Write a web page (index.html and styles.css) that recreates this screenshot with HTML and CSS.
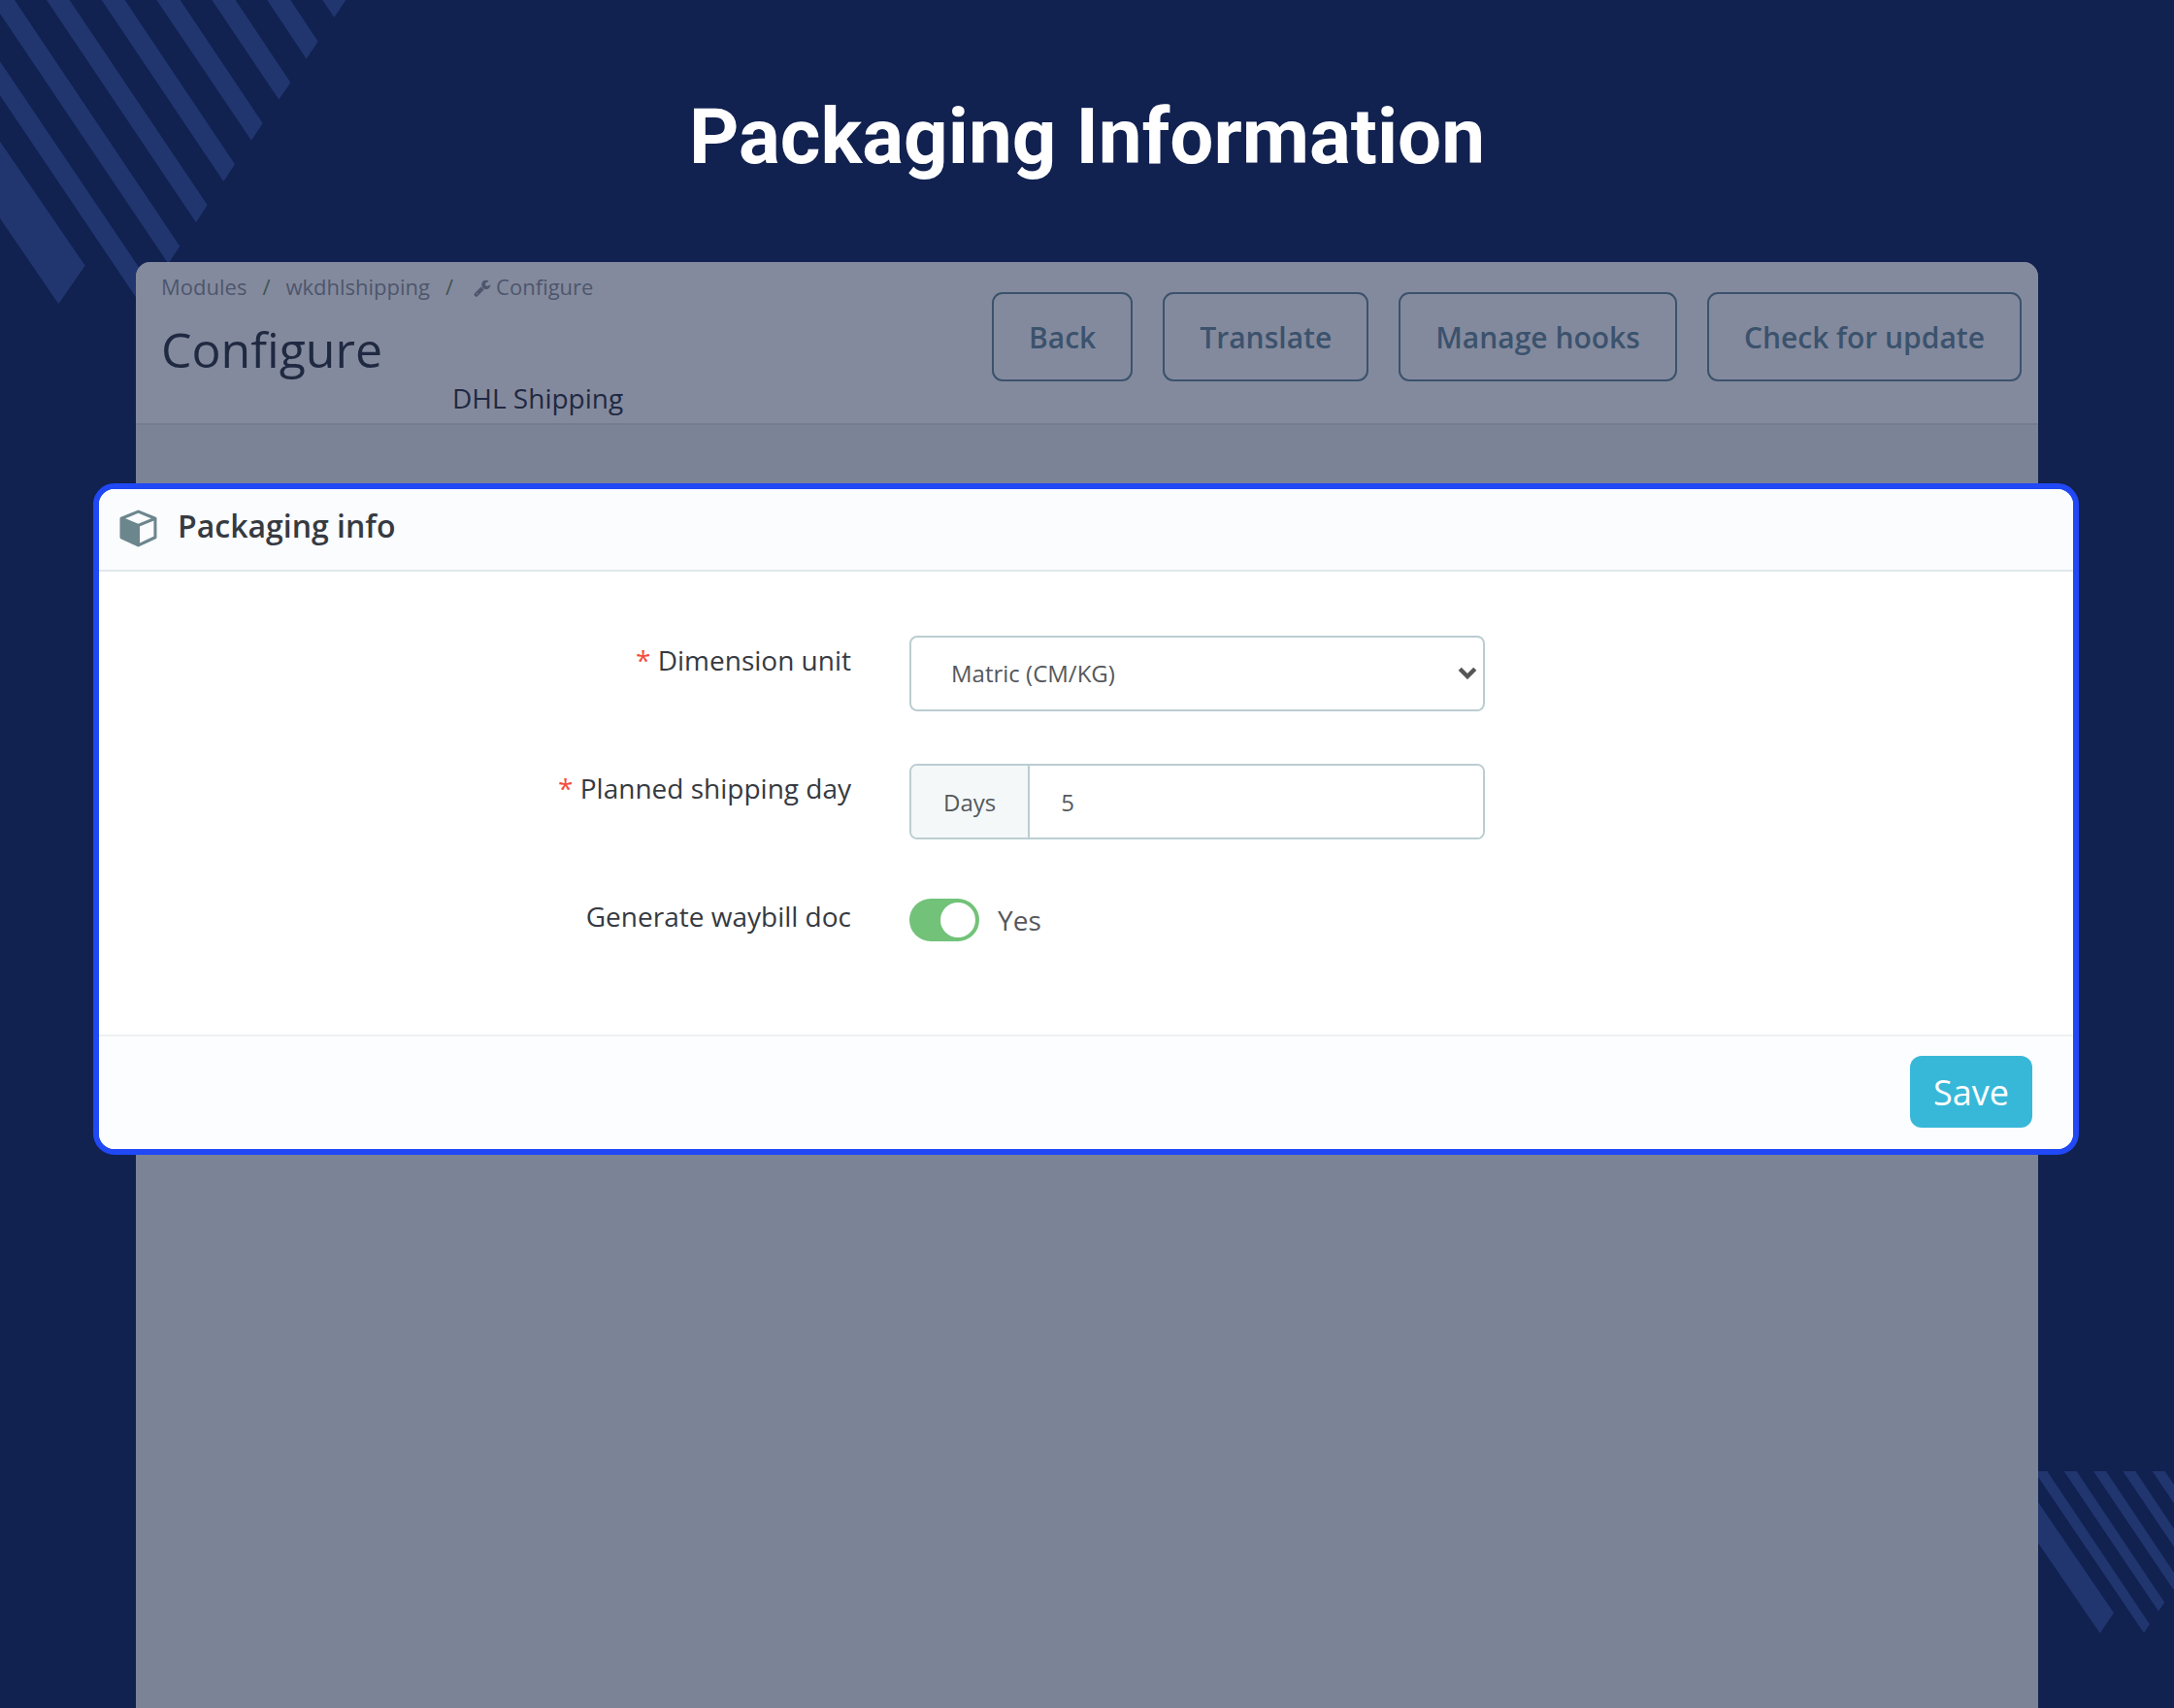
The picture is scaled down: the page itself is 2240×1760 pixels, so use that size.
FILE: index.html
```html
<!DOCTYPE html>
<html lang="en">
<head>
<meta charset="utf-8">
<meta name="viewport" content="width=device-width, initial-scale=1">
<title>Packaging Information</title>
<link rel="stylesheet" href="styles.css">
</head>
<body>
<div class="page">
  <svg class="stripes stripes-top" viewBox="0 0 1140 990" aria-hidden="true">
    <path d="M997 0H1069L1033 54ZM826 0H898L983 128L947 182ZM655 0H728L898 255L862 308ZM484 0H557L812 381L777 434ZM314 0H386L726 508L691 561ZM144 0H215L641 634L606 688ZM0 0H45L556 761L520 815L0 42ZM0 190L471 888L435 941L0 295ZM0 437L263 821L181 940L0 675Z"/>
  </svg>
  <svg class="stripes stripes-bottom" viewBox="0 0 450 600" aria-hidden="true">
    <path d="M18 48H58L375 521L357 548ZM110 48H149L421 454L402 481ZM201 48H240L467 387L448 414ZM292 48H331L512 319L493 346ZM383 48H422L560 254L540 282ZM0 100L264 486L221 549L0 226Z"/>
  </svg>

  <h1 class="page-title">Packaging Information</h1>

  <main class="panel">
    <header class="panel-header">
      <div class="heading">
        <nav class="breadcrumb" aria-label="Breadcrumb">
          <a href="#">Modules</a>
          <span class="slash">/</span>
          <a href="#">wkdhlshipping</a>
          <span class="slash">/</span>
          <a class="current" href="#">
            <svg class="wrench" viewBox="64 64 1700 1728" aria-hidden="true"><path d="M448 1472q0-26-19-45t-45-19-45 19-19 45 19 45 45 19 45-19 19-45zm644-420l-682 682q-37 37-90 37-52 0-91-37l-106-108q-38-36-38-90 0-53 38-91l681-681q39 98 114.500 173.500t173.500 114.500zm634-435q0 39-23 106-47 134-164.500 217.500t-258.500 83.500q-185 0-316.500-131.500t-131.500-316.500 131.500-316.500 316.500-131.500q58 0 121.500 16.500t107.500 46.500q16 11 16 28t-16 28l-293 169v224l193 107q5-3 79-48.500t135.500-81 70.500-35.500q15 0 23.500 10t8.500 25z"/></svg>Configure
          </a>
        </nav>
        <h2 class="title">Configure</h2>
        <p class="module-name">DHL Shipping</p>
      </div>
      <div class="toolbar">
        <button type="button">Back</button>
        <button type="button">Translate</button>
        <button type="button">Manage hooks</button>
        <button type="button">Check for update</button>
      </div>
    </header>

    <form class="card">
      <header class="card-header">
        <svg class="cube" viewBox="0 0 38 38" aria-hidden="true">
          <path class="cube-line" d="M19 3L36 10V29L19 37L2 29V10Z"/>
          <path class="cube-line" d="M2 10L19 17L36 10M19 17V37"/>
          <path class="cube-face" d="M2 10L19 17V37L2 29Z"/>
        </svg>
        <h3>Packaging info</h3>
      </header>
      <div class="card-body">
        <div class="row">
          <label for="unit"><span class="required">*</span> Dimension unit</label>
          <div class="select">
            <select id="unit"><option>Matric (CM/KG)</option></select>
            <svg class="chevron" viewBox="0 0 18 12" aria-hidden="true"><path d="M2 2L9 9L16 2"/></svg>
          </div>
        </div>
        <div class="row">
          <label for="days"><span class="required">*</span> Planned shipping day</label>
          <div class="input-group">
            <span class="addon">Days</span>
            <input id="days" type="text" value="5">
          </div>
        </div>
        <div class="row">
          <label for="waybill">Generate waybill doc</label>
          <div class="switch">
            <input id="waybill" type="checkbox" role="switch" checked>
            <span>Yes</span>
          </div>
        </div>
      </div>
      <footer class="card-footer">
        <button type="submit">Save</button>
      </footer>
    </form>
  </main>
</div>
</body>
</html>
```
FILE: styles.css
```css
* {
  box-sizing: border-box;
}

body,
h1,
h2,
h3,
p {
  margin: 0;
}

body {
  background: #112150;
  font-family: "Open Sans", "Noto Sans", sans-serif;
}

button,
input,
select {
  font-family: inherit;
}

.page {
  position: relative;
  display: flex;
  flex-direction: column;
  min-height: 100vh;
  overflow: hidden;
}

.stripes {
  position: absolute;
  fill: #21366f;
}

.stripes-top {
  top: 0;
  left: 0;
  width: 380px;
}

.stripes-bottom {
  right: 0;
  bottom: 60px;
  width: 150px;
}

.page-title {
  padding: 93px 0 81px;
  color: #fff;
  font: 700 80px/96px Roboto, sans-serif;
  text-align: center;
}

.panel {
  position: relative;
  flex: 1;
  margin: 0 140px;
  border-radius: 15px 15px 0 0;
  background: #7b8396;
}

.panel-header {
  display: flex;
  justify-content: space-between;
  align-items: flex-start;
  padding: 0 17px 0 26px;
  border-bottom: 2px solid #747d8f;
  border-radius: 15px 15px 0 0;
  background: #848a9d;
}

.heading {
  width: 500px;
}

.breadcrumb {
  display: flex;
  gap: 16px;
  padding-top: 9px;
  color: #4d566d;
  font-size: 22px;
  line-height: 32px;
}

.breadcrumb a {
  color: inherit;
  text-decoration: none;
}

.breadcrumb .slash {
  color: #3f5550;
}

.breadcrumb .current {
  display: flex;
  align-items: center;
  gap: 5px;
  padding-left: 5px;
}

.wrench {
  width: 18px;
  height: 18px;
  margin-top: 4px;
  fill: currentColor;
}

.title {
  padding-top: 15px;
  color: #1f2942;
  font-size: 50px;
  font-weight: 400;
  line-height: 68px;
}

.module-name {
  padding: 0 0 10px 300px;
  color: #1f2942;
  font-size: 28px;
  line-height: 32px;
}

.toolbar {
  display: flex;
  gap: 31px;
  padding-top: 31px;
}

.toolbar button {
  height: 92px;
  padding: 0 36px;
  border: 2px solid #3b526d;
  border-radius: 11px;
  background: none;
  color: #3b526d;
  font-size: 30px;
  font-weight: 600;
}

.card {
  margin: 60px -42px 0 -44px;
  overflow: hidden;
  border: 6px solid #2148f5;
  border-radius: 22px;
  background: #fff;
}

.card-header {
  display: flex;
  align-items: center;
  gap: 21px;
  height: 85px;
  padding: 0 21px 4px;
  border-bottom: 2px solid #dfe8ec;
  background: #fafcfe;
}

.card-header h3 {
  padding-bottom: 4px;
  color: #363a41;
  font-size: 32px;
  font-weight: 600;
  line-height: 44px;
}

.cube {
  width: 39px;
  height: 39px;
  overflow: visible;
}

.cube-line {
  fill: none;
  stroke: #6c868e;
  stroke-width: 3;
  stroke-linejoin: round;
}

.cube-face {
  fill: #6c868e;
}

.card-body {
  display: grid;
  gap: 54px;
  padding: 66px 0 69px;
}

.row {
  display: grid;
  grid-template-columns: 775fr 593fr 546fr;
  column-gap: 60px;
  min-height: 78px;
}

.row label {
  padding-top: 5px;
  color: #363a41;
  font-size: 28px;
  line-height: 40px;
  text-align: right;
}

.required {
  color: #f54c3e;
}

.select {
  position: relative;
  display: flex;
}

.select select {
  width: 100%;
  height: 78px;
  padding: 0 41px 2px;
  border: 2px solid #bbcdd2;
  border-radius: 8px;
  background: #fff;
  color: #55585c;
  font-size: 24px;
  appearance: none;
}

.chevron {
  position: absolute;
  top: 32px;
  right: 8px;
  width: 20px;
  fill: none;
  stroke: #555;
  stroke-width: 4;
}

.input-group {
  display: flex;
  height: 78px;
  border: 2px solid #bbcdd2;
  border-radius: 8px;
  overflow: hidden;
  color: #55585c;
  font-size: 24px;
}

.addon {
  display: flex;
  align-items: center;
  padding: 0 33px;
  border-right: 2px solid #bbcdd2;
  background: #f4f8f9;
}

.input-group input {
  flex: 1;
  min-width: 0;
  padding: 0 32px;
  border: 0;
  background: #fff;
  color: inherit;
  font-size: 24px;
}

.switch {
  display: flex;
  align-items: center;
  gap: 19px;
  height: 58px;
  color: #55585c;
  font-size: 28px;
}

.switch input {
  width: 72px;
  height: 44px;
  margin: 0;
  padding: 4px;
  border-radius: 22px;
  background: #bbcdd2;
  appearance: none;
}

.switch input::before {
  content: "";
  display: block;
  width: 36px;
  height: 36px;
  border-radius: 50%;
  background: #fff;
}

.switch input:checked {
  background: #72c279;
}

.switch input:checked::before {
  margin-left: auto;
}

.card-footer {
  display: flex;
  justify-content: flex-end;
  padding: 20px 42px 22px;
  border-top: 2px solid #eff1f2;
  background: #fbfdfe;
}

.card-footer button {
  height: 74px;
  padding: 0 24px;
  border: 0;
  border-radius: 12px;
  background: #38b8d8;
  color: #fff;
  font-size: 36px;
}
```
